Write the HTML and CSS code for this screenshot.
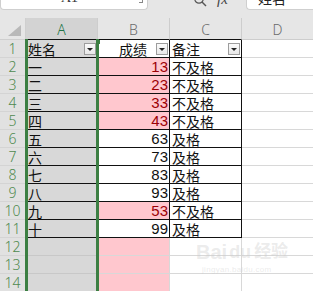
FILE: index.html
```html
<!DOCTYPE html>
<html>
<head>
<meta charset="utf-8">
<link rel="stylesheet" href="styles.css">
</head>
<body>
<div class="app">
  <div class="topbar">
    <div class="namebox"><span class="nb-text">A1</span><span class="nb-arrow"></span></div>
    <div class="fx-area">
      <svg class="mag" width="14" height="10" viewBox="0 0 14 10"><circle cx="5" cy="1" r="4.2" fill="none" stroke="#555" stroke-width="1.2"/><line x1="8" y1="4" x2="12" y2="8" stroke="#555" stroke-width="1.4"/></svg>
      <span class="fx">fx</span>
    </div>
    <div class="formula"><span class="f-text">姓名</span></div>
  </div>
  <div class="sheet">
    <div class="corner"><svg width="16" height="12" viewBox="0 0 16 12"><polygon points="14,0 14,11 1,11" fill="#b9b9b9"/></svg></div>
    <div class="colh sel-h t-b">A</div>
    <div class="colh t-b">B</div>
    <div class="colh t-b">C</div>
    <div class="colh">D</div>

    <div class="rn">1</div>
    <div class="c sel t"><span class="txt">姓名</span><span class="fbtn"></span></div>
    <div class="c t end"><span class="txt hb">成绩</span><span class="fbtn"></span></div>
    <div class="c t"><span class="txt">备注</span><span class="fbtn"></span></div>
    <div class="c"></div>

    <div class="rn">2</div><div class="c sel t"><span class="txt">一</span></div><div class="c t num bad">13</div><div class="c t"><span class="txt">不及格</span></div><div class="c"></div>
    <div class="rn">3</div><div class="c sel t"><span class="txt">二</span></div><div class="c t num bad">23</div><div class="c t"><span class="txt">不及格</span></div><div class="c"></div>
    <div class="rn">4</div><div class="c sel t"><span class="txt">三</span></div><div class="c t num bad">33</div><div class="c t"><span class="txt">不及格</span></div><div class="c"></div>
    <div class="rn">5</div><div class="c sel t"><span class="txt">四</span></div><div class="c t num bad">43</div><div class="c t"><span class="txt">不及格</span></div><div class="c"></div>
    <div class="rn">6</div><div class="c sel t"><span class="txt">五</span></div><div class="c t num">63</div><div class="c t"><span class="txt">及格</span></div><div class="c"></div>
    <div class="rn">7</div><div class="c sel t"><span class="txt">六</span></div><div class="c t num">73</div><div class="c t"><span class="txt">及格</span></div><div class="c"></div>
    <div class="rn">8</div><div class="c sel t"><span class="txt">七</span></div><div class="c t num">83</div><div class="c t"><span class="txt">及格</span></div><div class="c"></div>
    <div class="rn">9</div><div class="c sel t"><span class="txt">八</span></div><div class="c t num">93</div><div class="c t"><span class="txt">及格</span></div><div class="c"></div>
    <div class="rn">10</div><div class="c sel t"><span class="txt">九</span></div><div class="c t num bad">53</div><div class="c t"><span class="txt">不及格</span></div><div class="c"></div>
    <div class="rn">11</div><div class="c sel t"><span class="txt">十</span></div><div class="c t num">99</div><div class="c t"><span class="txt">及格</span></div><div class="c"></div>
    <div class="rn">12</div><div class="c sel"></div><div class="c bad"></div><div class="c"></div><div class="c"></div>
    <div class="rn">13</div><div class="c sel"></div><div class="c bad"></div><div class="c"></div><div class="c"></div>
    <div class="rn">14</div><div class="c sel"></div><div class="c bad"></div><div class="c"></div><div class="c"></div>
  </div>
  <div class="selection"></div>
  <div class="handle"></div>
  <div class="watermark">
    <div class="wm-logo"><span class="wm-bai">Bai</span><span class="wm-du">du</span><span class="wm-jy">经验</span></div>
    <div class="wm-url">jingyan.baidu.com</div>
  </div>
</div>
</body>
</html>
```
FILE: styles.css
```css
* { box-sizing: border-box; }
html, body { margin: 0; padding: 0; }
body { background: #e6e6e6; }
.app {
  position: relative;
  width: 313px;
  height: 291px;
  overflow: hidden;
  background: #e6e6e6;
  font-family: "Liberation Sans", "Noto Sans CJK SC", sans-serif;
}
.topbar {
  display: flex;
  height: 10px;
}
.namebox {
  position: relative;
  width: 148px;
  height: 10px;
  background: #fff;
  border: 1px solid #cfcfcf;
  border-top: none;
  border-radius: 0 0 4px 4px;
  overflow: hidden;
}
.nb-text {
  position: absolute;
  left: 60px;
  top: -10px;
  font-family: "Liberation Serif", serif;
  font-size: 14px;
  line-height: 16px;
  color: #333;
}
.nb-arrow {
  position: absolute;
  left: 138px;
  top: 0;
  width: 4px;
  height: 3px;
  border-right: 1px solid #888;
  border-bottom: 1px solid #888;
}
.fx-area {
  width: 98px;
  display: flex;
  align-items: flex-start;
  overflow: hidden;
}
.mag { margin-left: 46px; margin-top: -2px; }
.fx {
  margin-left: 9px;
  margin-top: -9px;
  font-family: "Liberation Serif", serif;
  font-style: italic;
  font-size: 15px;
  line-height: 16px;
  color: #444;
}
.formula {
  flex: 1;
  height: 10px;
  background: #fff;
  border: 1px solid #cfcfcf;
  border-top: none;
  border-right: none;
  border-radius: 0 0 0 4px;
  overflow: hidden;
}
.f-text {
  display: block;
  margin-left: 11px;
  margin-top: -10px;
  font-family: "Noto Sans CJK SC", sans-serif;
  font-size: 14px;
  line-height: 16px;
  color: #222;
}
.sheet {
  margin-top: 8px;
  display: grid;
  grid-template-columns: 26px 72px 72px 72px 72px;
  grid-template-rows: 22px repeat(14, 18px);
}
.corner {
  background: #e6e6e6;
  border-right: 1px solid #cfcfcf;
  border-bottom: 1px solid #cfcfcf;
  padding: 7px 0 0 7px;
}
.corner svg { display: block; }
.colh {
  background: #e6e6e6;
  border-right: 1px solid #cdcdcd;
  border-bottom: 1px solid #cdcdcd;
  text-align: center;
  font-family: "Noto Sans", "Liberation Sans", sans-serif;
  font-weight: 300;
  font-size: 14px;
  line-height: 23px;
  color: #6b6b6b;
}
.colh.sel-h { background: #d3d3d3; color: #217346; }
.colh.t-b { border-bottom-color: #111; }
.rn {
  background: #e1e1e1;
  border-right: 1px solid #cdcdcd;
  border-bottom: 1px solid #d4d4d4;
  text-align: center;
  font-family: "Noto Sans", "Liberation Sans", sans-serif;
  font-weight: 300;
  font-size: 14px;
  line-height: 18px;
  color: #4f8a4f;
}
.c {
  display: flex;
  align-items: flex-end;
  background: #fff;
  border-right: 1px solid #d8d8d8;
  border-bottom: 1px solid #d8d8d8;
  font-size: 14px;
  line-height: 16px;
  color: #111;
  padding: 0 1px 0 2px;
}
.c.sel { background: #d8d8d8; border-right-color: #c8c8c8; border-bottom-color: #c8c8c8; }
.c.t { border-right-color: #111; border-bottom-color: #111; }
.c.num { justify-content: flex-end; padding-right: 1px; font-size: 15px; }
.c.bad { background: #ffc7ce; color: #9c0006; }
.c.end { justify-content: flex-end; }
.txt {
  font-family: "Noto Sans CJK SC", sans-serif;
  font-size: 14px;
  line-height: 16px;
}
.hb { margin-right: 9px; }
.fbtn {
  position: relative;
  width: 12px;
  height: 12px;
  margin-left: auto;
  margin-bottom: 2px;
  border: 1px solid #9d9d9d;
  background: linear-gradient(#fafafa, #e8e8e8);
  flex: none;
}
.c.end .fbtn { margin-left: 0; }
.fbtn::after {
  content: "";
  position: absolute;
  left: 2px;
  top: 4px;
  border-left: 3px solid transparent;
  border-right: 3px solid transparent;
  border-top: 3px solid #222;
}
.selection {
  position: absolute;
  left: 25px;
  top: 39px;
  width: 74px;
  height: 260px;
  border-left: 3px solid #3c7f43;
  border-right: 3px solid #3c7f43;
}
.handle {
  position: absolute;
  left: 96px;
  top: 40px;
  width: 4px;
  height: 4px;
  background: #3c7f43;
}
.watermark {
  position: absolute;
  left: 196px;
  top: 240px;
  width: 100px;
  color: rgba(205, 205, 205, 0.4);
  pointer-events: none;
}
.wm-logo {
  display: flex;
  align-items: flex-end;
  font-family: "Liberation Sans", "Noto Sans CJK SC", sans-serif;
  font-weight: bold;
  line-height: 24px;
}
.wm-bai { font-size: 20px; }
.wm-du { font-size: 18px; margin-left: 2px; }
.wm-jy { font-size: 17px; margin-left: 3px; }
.wm-url {
  font-size: 8px;
  line-height: 12px;
  margin-left: 6px;
  letter-spacing: 0.3px;
}
```
